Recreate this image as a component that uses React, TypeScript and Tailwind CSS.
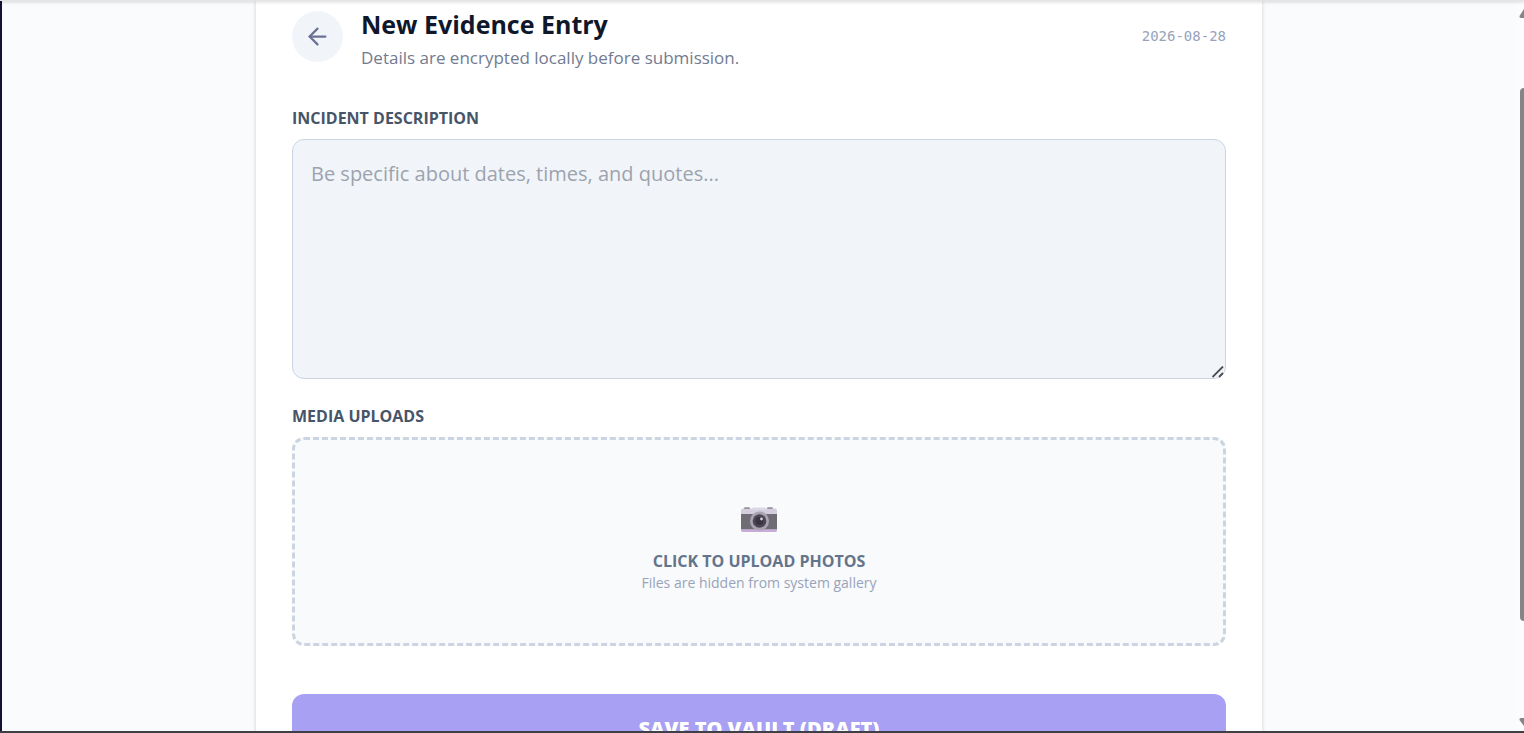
import { useState } from "react";
import { ArrowLeft } from "lucide-react";

function CameraIcon() {
  return (
    <svg width="36" height="26" viewBox="0 0 36 26" aria-hidden="true">
      <rect x="3" y="0.5" width="6" height="3" rx="1" fill="#5f5b66" />
      <rect x="26" y="0.5" width="6" height="3" rx="1" fill="#5f5b66" />
      <rect x="0" y="1.5" width="36" height="23.5" rx="2" fill="#d3cddd" />
      <path d="M9 3 L12 0.5 H24 L27 3 Z" fill="#dcd7e5" />
      <rect x="0" y="7" width="36" height="15.5" fill="#706c76" />
      <path d="M0 22.5 H36 V23 a2 2 0 0 1 -2 2 H2 a2 2 0 0 1 -2 -2 Z" fill="#c8acd8" />
      <circle cx="18.5" cy="14" r="9.5" fill="#aaa2b2" />
      <circle cx="18.5" cy="14" r="6.8" fill="#4b4654" />
      <circle cx="18.5" cy="14" r="4" fill="#39343f" />
      <circle cx="20.5" cy="12" r="1.4" fill="#d5d0dd" />
    </svg>
  );
}

function ScrollTrack() {
  return (
    <div className="flex w-2 shrink-0 flex-col items-end overflow-hidden bg-[#fcfcfd]" aria-hidden="true">
      <svg className="mt-2 shrink-0" width="5" height="10" viewBox="0 0 5 10">
        <path d="M5 0 L0.5 7 Q0 9 2 9 H5 Z" fill="#858585" />
      </svg>
      <div className="mt-[69px] h-[533px] w-1 shrink-0 rounded-l-full bg-[#858585]" />
      <div className="flex-1" />
      <svg className="mb-1 shrink-0" width="5" height="10" viewBox="0 0 5 10">
        <path d="M5 9 L0.5 3 Q0 1 2 1 H5 Z" fill="#858585" />
      </svg>
    </div>
  );
}

export default function App() {
  const [description, setDescription] = useState("");

  return (
    <div className="flex h-screen flex-col overflow-hidden bg-[#fafbfd] font-['Open_Sans','Noto_Sans',sans-serif]">
      <div className="relative z-10 h-px shrink-0 bg-[#e3e4e6] shadow-[0_1px_3px_rgba(0,0,0,0.3)]" />

      <div className="flex min-h-0 flex-1 border-l-2 border-[#13103a]">
        <main className="min-w-0 flex-1 overflow-hidden">
          <div className="mx-auto max-w-[1006px] bg-white px-9 pt-[3px] pb-9 shadow-[0_0_4px_rgba(0,0,0,0.18)]">
            <header className="mb-[38px] flex items-center justify-between">
              <div className="flex items-center gap-[18px]">
                <button
                  type="button"
                  aria-label="Go back"
                  className="flex size-[51px] items-center justify-center rounded-full bg-[#f1f5f9]"
                >
                  <ArrowLeft size={27} strokeWidth={2} color="#6b7194" />
                </button>
                <div>
                  <h1 className="text-[25px] leading-10 font-bold text-[#0f172a]">New Evidence Entry</h1>
                  <p className="mt-1 text-[17px] leading-5 text-[#727b90]">
                    Details are encrypted locally before submission.
                  </p>
                </div>
              </div>
              <time className="font-['DejaVu_Sans_Mono',monospace] text-sm text-[#98a3ba]">2026-08-28</time>
            </header>

            <form onSubmit={(e) => e.preventDefault()}>
              <label htmlFor="description" className="mb-[9px] block text-base leading-6 font-bold text-[#475569]">
                INCIDENT DESCRIPTION
              </label>
              <div className="relative">
                <textarea
                  id="description"
                  value={description}
                  onChange={(e) => setDescription(e.target.value)}
                  placeholder="Be specific about dates, times, and quotes..."
                  className="block h-60 w-full resize-y rounded-xl border border-[#cbd5e1] bg-[#f1f5f9] p-[18px] text-xl leading-8 text-[#0f172a] placeholder:text-[#9ca3af] [&::-webkit-resizer]:bg-transparent"
                />
                {/* resize grip */}
                <svg
                  className="pointer-events-none absolute right-0.5 bottom-px"
                  width="12"
                  height="12"
                  viewBox="0 0 12 12"
                  stroke="#4b4b50"
                  strokeWidth="1.8"
                  aria-hidden="true"
                >
                  <path d="M0.5 11 L11 0.5 M7 11 L11 7" />
                </svg>
              </div>

              <label htmlFor="photos" className="mt-[25px] mb-[9px] block text-base leading-6 font-bold text-[#475569]">
                MEDIA UPLOADS
              </label>
              <label
                htmlFor="photos"
                className="flex h-[209px] cursor-pointer flex-col items-center justify-center rounded-xl border-3 border-dashed border-[#cbd5e1] bg-[#f9fafc] pt-4"
              >
                <CameraIcon />
                <span className="mt-4 text-base leading-6 font-bold text-[#64748b]">CLICK TO UPLOAD PHOTOS</span>
                <span className="text-sm leading-5 text-[#98a3ba]">Files are hidden from system gallery</span>
                <input id="photos" type="file" accept="image/*" multiple className="sr-only" />
              </label>

              <button
                type="submit"
                className="mt-12 h-[70px] w-full rounded-xl bg-[#a8a0f2] text-xl font-extrabold text-white"
              >
                SAVE TO VAULT (DRAFT)
              </button>
            </form>
          </div>
        </main>
        <ScrollTrack />
      </div>

      <div className="h-0.5 shrink-0 bg-[#3f3f46]" />
    </div>
  );
}
